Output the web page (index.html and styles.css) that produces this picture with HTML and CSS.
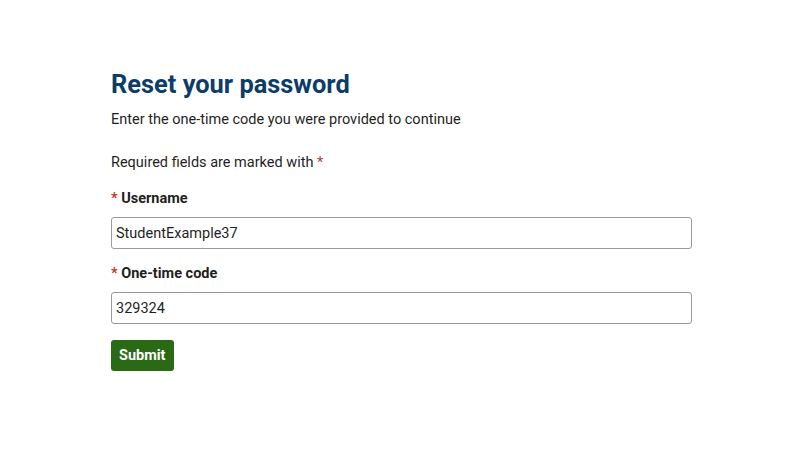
FILE: index.html
```html
<!DOCTYPE html>
<html lang="en">
<head>
<meta charset="utf-8">
<title>Reset your password</title>
<link rel="stylesheet" href="styles.css">
</head>
<body>
<main class="page">
  <h1 class="title">Reset your password</h1>
  <p class="intro">Enter the one-time code you were provided to continue</p>
  <p class="required-note">Required fields are marked with <span class="req">*</span></p>
  <form class="form">
    <div class="field">
      <label class="label" for="username"><span class="req">*</span> Username</label>
      <input class="input" id="username" type="text" value="StudentExample37">
    </div>
    <div class="field">
      <label class="label" for="code"><span class="req">*</span> One-time code</label>
      <input class="input" id="code" type="text" value="329324">
    </div>
    <div class="actions">
      <button class="btn" type="button">Submit</button>
    </div>
  </form>
</main>
</body>
</html>
```
FILE: styles.css
```css
html, body {
  margin: 0;
  padding: 0;
  background: #ffffff;
}
body {
  font-family: Roboto, "Liberation Sans", Arial, sans-serif;
  color: #1f1f1f;
  font-size: 14.5px;
  line-height: 20px;
}
.page {
  padding: 70px 0 0 111px;
  width: 581px;
}
.title {
  margin: 0;
  font-size: 25.4px;
  line-height: 29px;
  font-weight: 700;
  color: #0d3d66;
}
.intro {
  margin: 11px 0 0;
}
.required-note {
  margin: 23px 0 0;
}
.req {
  color: #c0392b;
}
.form {
  margin-top: 16px;
  display: flex;
  flex-direction: column;
  gap: 15px;
}
.field {
  display: flex;
  flex-direction: column;
  gap: 8px;
}
.label {
  font-weight: 700;
}
.input {
  box-sizing: border-box;
  width: 581px;
  height: 32px;
  margin: 0;
  padding: 0 4px;
  border: 1px solid #9a9a9a;
  border-radius: 3px;
  font-family: inherit;
  font-size: 14.5px;
  color: #1f1f1f;
  background: #fff;
}
.actions {
  margin-top: 1px;
}
.btn {
  height: 31px;
  padding: 0 8px;
  border: none;
  border-radius: 3px;
  background: #2b6a14;
  color: #fff;
  font-family: inherit;
  font-size: 14.5px;
  font-weight: 700;
}
```
